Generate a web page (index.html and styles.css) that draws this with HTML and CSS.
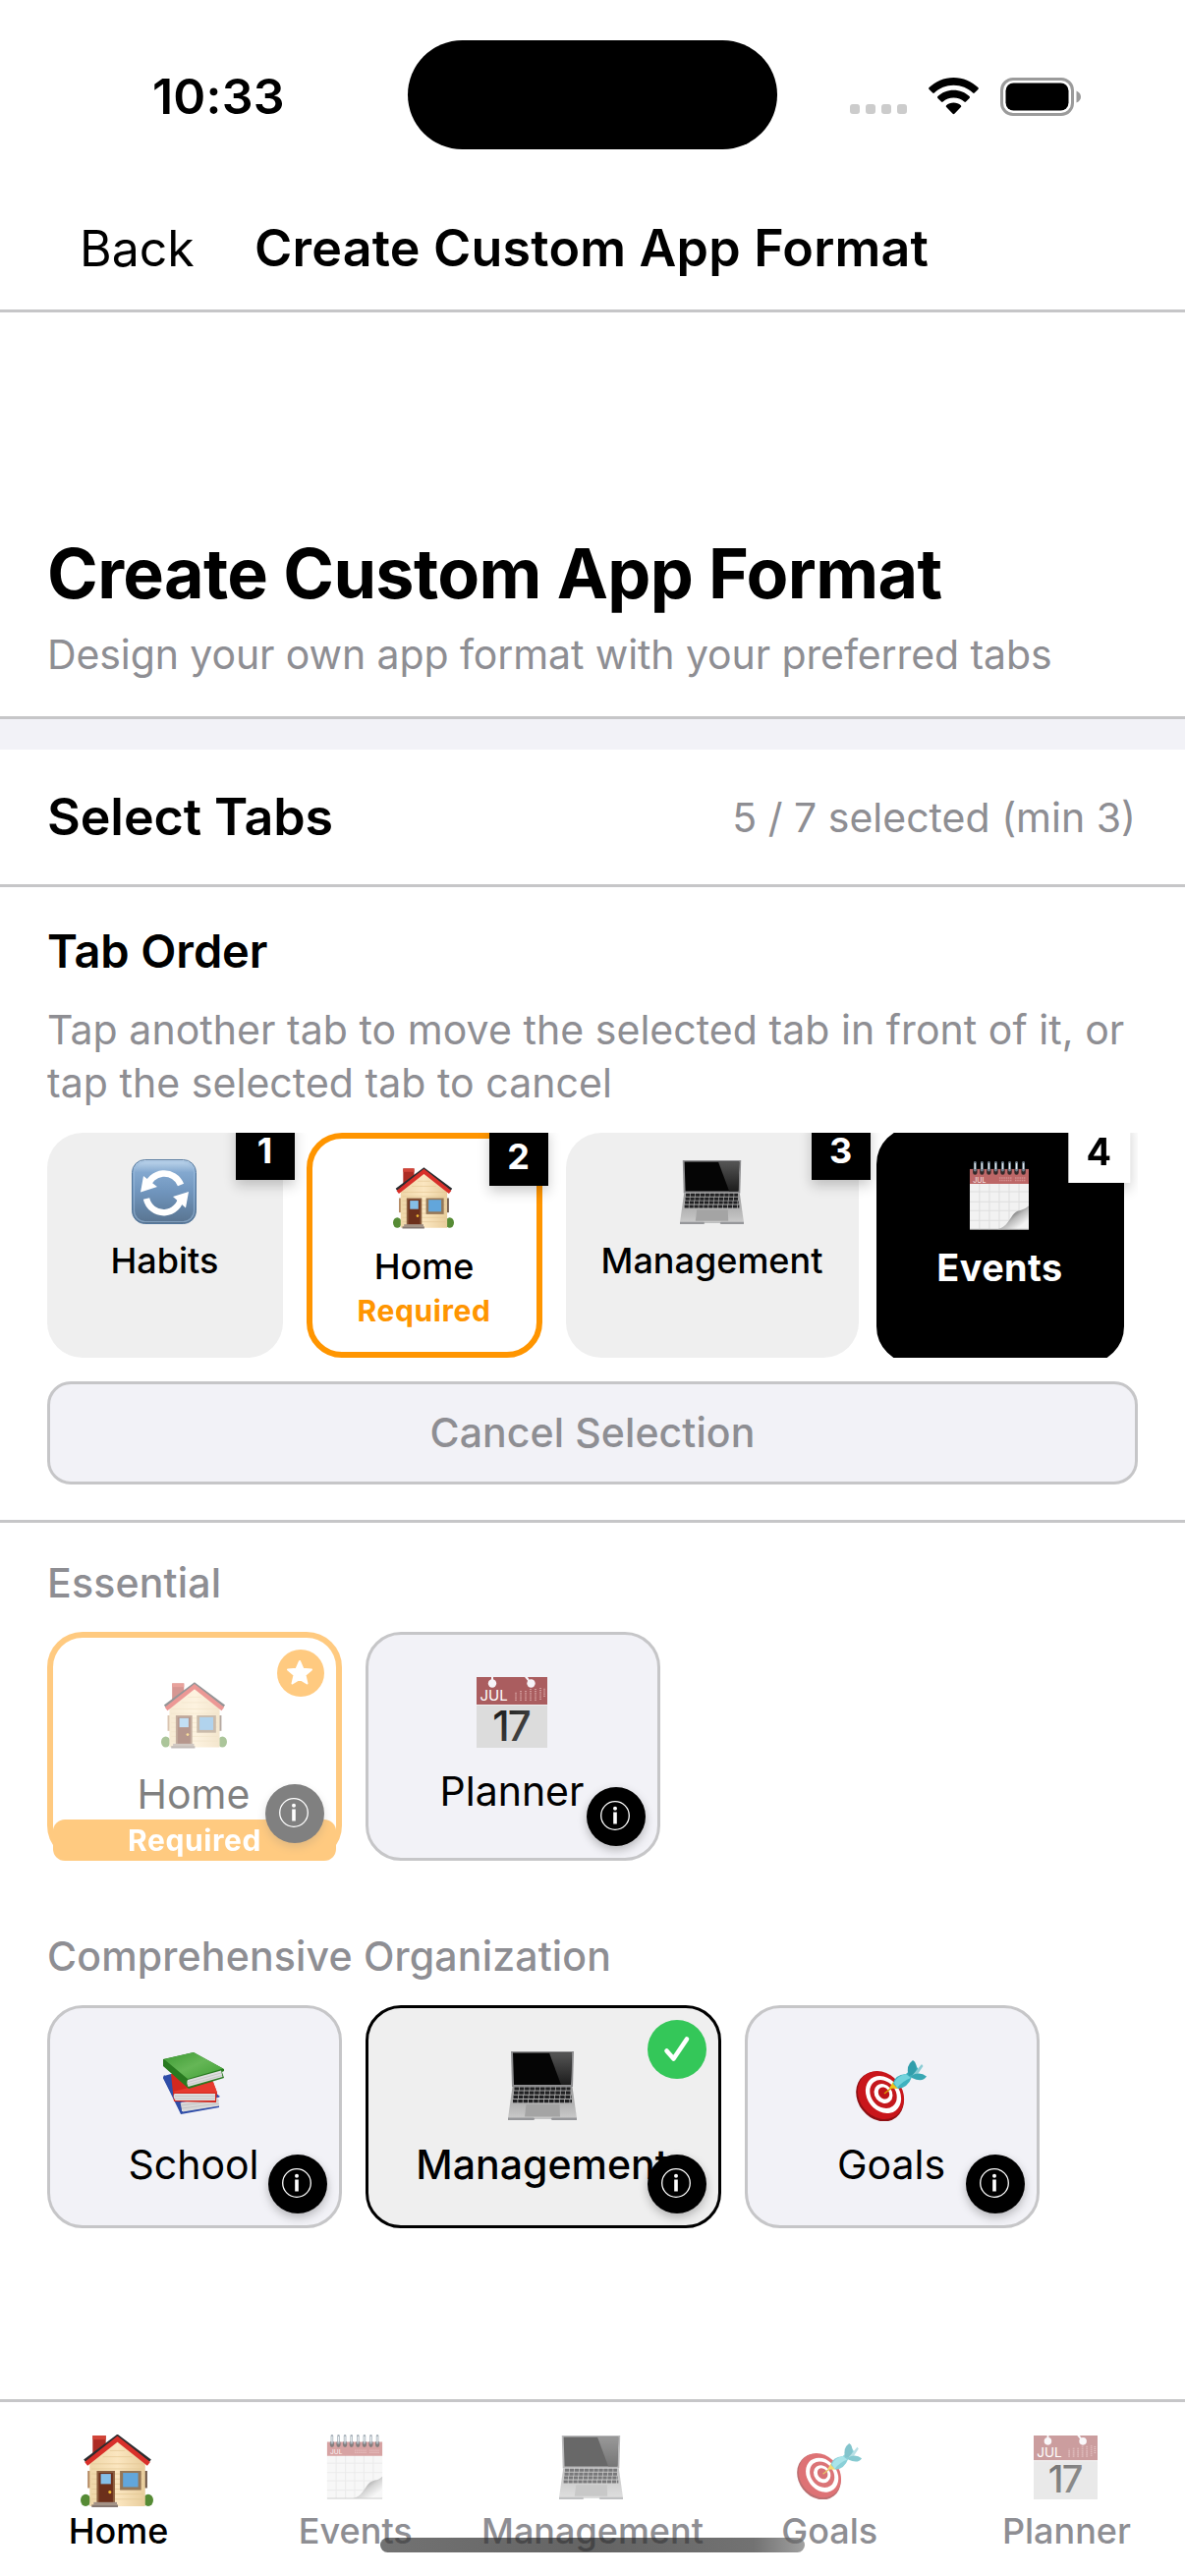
FILE: index.html
```html
<!DOCTYPE html>
<html lang="en">

<head>
  <meta charset="utf-8" />
  <title>Create Custom App Format</title>
  <link rel="stylesheet" href="styles.css">
</head>

<body>
  <!-- icons used by the tabs -->
  <svg class="icon_defs" width="0" height="0">
    <defs>
      <linearGradient id="blueBox" x1="0" y1="0" x2="0" y2="1">
        <stop offset="0" stop-color="#c3d9ee" /><stop offset="0.2" stop-color="#83a8cf" />
        <stop offset="0.5" stop-color="#7095bd" /><stop offset="1" stop-color="#58738f" />
      </linearGradient>
      <linearGradient id="wall" x1="0" y1="0" x2="1" y2="0">
        <stop offset="0" stop-color="#eed6a8" /><stop offset="0.5" stop-color="#fbe6c0" /><stop offset="1" stop-color="#e8cd9c" />
      </linearGradient>
      <linearGradient id="curl" x1="0" y1="0" x2="1" y2="1">
        <stop offset="0.3" stop-color="#555" /><stop offset="0.55" stop-color="#bbb" /><stop offset="0.8" stop-color="#f2f2f2" />
      </linearGradient>
      <linearGradient id="metal" x1="0" y1="0" x2="0" y2="1">
        <stop offset="0" stop-color="#999" /><stop offset="1" stop-color="#c9c9c9" />
      </linearGradient>
      <linearGradient id="green" x1="0" y1="0" x2="1" y2="1">
        <stop offset="0" stop-color="#3d9a33" /><stop offset="0.5" stop-color="#65b656" /><stop offset="1" stop-color="#3f9f34" />
      </linearGradient>
      <linearGradient id="glare" x1="0" y1="0" x2="0" y2="1">
        <stop offset="0" stop-color="#555" /><stop offset="1" stop-color="#1c1c1c" />
      </linearGradient>
      <linearGradient id="digits" x1="0" y1="0" x2="1" y2="1">
        <stop offset="0" stop-color="#111" /><stop offset="1" stop-color="#555" />
      </linearGradient>
    </defs>

    <symbol id="habits" viewBox="0 0 66 66">
      <rect x="0.5" y="0.5" width="65" height="65" rx="13" fill="url(#blueBox)" stroke="#54789d" />
      <rect x="2.5" y="2.5" width="61" height="61" rx="11" fill="none" stroke="#9dbddc" stroke-width="1.2" opacity="0.6" />
      <path d="M15.500 29A18 18 0 0 1 50 26M50.500 38A18 18 0 0 1 15 40" fill="none" stroke="#fff" stroke-width="6.500" />
      <path d="M12 17L9 33.500L26 28ZM58 33L42 38L55 49.500Z" fill="#fff" />
    </symbol>

    <symbol id="home" viewBox="0 0 72 72">
      <rect x="12" y="1" width="13" height="27" fill="#ad2c24" />
      <rect x="12" y="1" width="13" height="4" fill="#d14438" />
      <rect x="7" y="36" width="3" height="17" fill="#b48a63" /><rect x="63" y="36" width="3" height="17" fill="#6b5344" />
      <ellipse cx="5" cy="65" rx="5" ry="6" fill="#568b35" /><ellipse cx="67" cy="65" rx="5" ry="6" fill="#568b35" />
      <path d="M9 28L37 4L64 28V71H9Z" fill="url(#wall)" />
      <path d="M11 29H62M11 34H62M11 39H62M11 44H62M11 49H62M11 54H62M11 59H62M11 64H62M22 22H51M29 16H44" stroke="#e3c795" stroke-width="0.7" />
      <path d="M4 26L36.500 1.500L69 26" fill="none" stroke="#2b2b2e" stroke-width="3" />
      <path d="M5.500 29L36.500 4.500L67.500 29" fill="none" stroke="#d9302a" stroke-width="4.600" />
      <rect x="16" y="36" width="18" height="32" fill="#8a5d3e" /><rect x="18" y="38" width="14" height="29" fill="#6c2f1b" />
      <rect x="20" y="39" width="10" height="10" fill="#85bee8" /><circle cx="29" cy="57" r="1.5" fill="#f2bd35" />
      <rect x="39" y="36" width="21" height="19" fill="#957757" /><rect x="42" y="38" width="15" height="14" fill="#62a6db" />
      <rect x="13" y="67" width="23" height="2.500" fill="#a39287" /><rect x="11" y="69.500" width="26" height="2.500" fill="#857872" />
    </symbol>

    <symbol id="laptop" viewBox="0 0 70 70">
      <path d="M3 0H67L66 36H4Z" fill="#8d8d8f" />
      <path d="M5 1.500H65L64 34H6Z" fill="#050505" />
      <path d="M42 1.500H65L64 34H54Z" fill="url(#glare)" />
      <path d="M4.500 36H65.500L70 68H0Z" fill="url(#metal)" />
      <path d="M6.500 38H63.500M6 42.200H64M5.500 46.400H64.500M5 50.600H65" stroke="#202022" stroke-width="3.200" stroke-dasharray="4.500 0.800" />
      <path d="M18.500 54H52.500L53 66.500H17Z" fill="#a4a4a4" />
      <path d="M0 67.500H26L28 69H43L45 67.500H70V70H45L43 68.500H28L26 70H0Z" fill="#96979a" />
    </symbol>

    <symbol id="spiral" viewBox="0 0 60 70">
      <rect x="0" y="8" width="60" height="61" fill="#f2f2f2" />
      <path d="M10 22V69M20 22V69M30 22V69M40 22V69M50 22V69M0 31H60M0 41H60M0 50H60M0 60H60" stroke="#dedede" stroke-width="1" />
      <path d="M0 8H60V23H0Z" fill="#bd6767" />
      <path d="M30 17H43M30 19.500H43M46 17H57M46 19.500H57" stroke="#d38e8e" stroke-width="1.300" stroke-dasharray="1.500 0.700" />
      <path d="M60 45C54 51 50 48 45 53C41 57 38 67 28 69H60Z" fill="url(#curl)" />
      <path d="M0 69H60" stroke="#aaa" />
      <path d="M5.500 9V11.500M12.500 9V11.500M19.500 9V11.500M26.500 9V11.500M33.500 9V11.500M40.500 9V11.500M47.500 9V11.500M54.500 9V11.500" stroke="#33292a" stroke-width="4.400" stroke-linecap="round" />
      <path d="M5.500 1.500V9M12.500 1.500V9M19.500 1.500V9M26.500 1.500V9M33.500 1.500V9M40.500 1.500V9M47.500 1.500V9M54.500 1.500V9" stroke="#71818f" stroke-width="2.800" stroke-linecap="round" />
      <path d="M5.500 2V8M12.500 2V8M19.500 2V8M26.500 2V8M33.500 2V8M40.500 2V8M47.500 2V8M54.500 2V8" stroke="#dfe7ec" stroke-width="1.200" />
    </symbol>

    <symbol id="planner" viewBox="0 0 72 72">
      <rect width="72" height="72" fill="#dcdcdc" />
      <rect width="72" height="28" fill="#aa5d5f" />
      <circle cx="16" cy="6.500" r="4.200" fill="#f7f4f8" /><circle cx="55.500" cy="6.500" r="4.200" fill="#f7f4f8" />
      <path d="M15 0H17V5H15ZM49 0H52L55 5H53Z" fill="#f7f4f8" />
      <path d="M40 24V15M45 24V14M50 24V13M55 24V12M60 24V12M65 23V11M69 20V11" stroke="#d09999" stroke-width="2" stroke-dasharray="1.200 1" />
      <path d="M0 28.500H72" stroke="#eee" />
    </symbol>

    <symbol id="school" viewBox="0 0 62 64">
      <path d="M0 26L1 23L18 40L19 62Z" fill="#2d499d" />
      <path d="M0 26L18 63L57 56V54L19 60L16 50L56 46L58 45L52 40L20 45L8 22L1 24Z" fill="#2f4da8" />
      <path d="M12 30L57 45L18 51Z" fill="#3f5fc4" />
      <path d="M17.500 51.500L56 47L57 54.500L20 60.500Z" fill="#d9d9d9" />
      <path d="M18 54L57 49M19 57L57 52" stroke="#bcbcbc" stroke-width="0.700" />
      <path d="M8 22L11 50L54 51V49L55 41L50 28L30 20Z" fill="#d3281f" />
      <path d="M10 40L51 30L55 41H12Z" fill="#e63a2f" />
      <path d="M11.500 42H53V49H12.500Q9.500 45 11.500 42Z" fill="#dedede" />
      <path d="M12 44.500H53M12 47H53" stroke="#bdbdbd" stroke-width="0.700" />
      <path d="M0 7L31 0L62 17V19L60 20L62 26L26 37L0 14Z" fill="#287a20" />
      <path d="M1 7L31 0L61 16.500L25 27Z" fill="url(#green)" />
      <path d="M25 28L59 18.500L60.500 25L25.500 35Q23.500 31 25 28Z" fill="#dedede" />
      <path d="M25 30.500L59 21M25 33L60 23.500" stroke="#bdbdbd" stroke-width="0.700" />
    </symbol>

    <symbol id="goals" viewBox="0 0 72 62">
      <ellipse cx="24.500" cy="37" rx="22.500" ry="27" transform="rotate(-38 24.500 37)" fill="#8e1014" />
      <ellipse cx="25.500" cy="35.500" rx="22" ry="26" transform="rotate(-38 25.500 35.500)" fill="#c9161b" />
      <ellipse cx="28" cy="35" rx="16.500" ry="20.500" transform="rotate(-38 28 35)" fill="#fff" />
      <ellipse cx="28" cy="34.500" rx="12.500" ry="15.500" transform="rotate(-38 28 34.500)" fill="#c4181d" />
      <ellipse cx="28" cy="34" rx="8.800" ry="10.500" transform="rotate(-38 28 34)" fill="#fff" />
      <ellipse cx="28.500" cy="33.500" rx="5.200" ry="6.500" transform="rotate(-38 28.500 33.500)" fill="#bd1318" />
      <path d="M29 34L39 26" stroke="#d8a200" stroke-width="1.500" />
      <path d="M34 28.500L38 22L43 29Z" fill="#efc318" />
      <path d="M38 24Q39 15 51 14L61 5L64 10L57 17Q53 28 43 29Z" fill="#3fb2bf" />
      <path d="M39 23Q42 16 51 14L56 18Q48 21 42 28Z" fill="#72d3dc" />
      <path d="M54 16Q50 6 58 0Q63 2 61 14Z" fill="#319eab" />
      <path d="M57 16L67 4L68.500 6L61 17Z" fill="#8bcdd5" />
      <path d="M56 16Q65 11 72 16.500Q68 23 57 18Z" fill="#38a7b3" />
    </symbol>

    <symbol id="info" viewBox="0 0 30 30">
      <circle cx="15" cy="15" r="14.300" fill="none" stroke="#fff" stroke-width="1.300" />
      <circle cx="15" cy="7.800" r="2" fill="#fff" />
      <rect x="13.200" y="11.500" width="3.600" height="12" fill="#fff" />
    </symbol>
  </svg>

  <div class="page">
    <div class="status_bar">
      <span class="status_time">10:33</span>
      <div class="island"></div>
      <div class="status_icons">
        <div class="signal"><i></i><i></i><i></i><i></i></div>
        <svg class="wifi" viewBox="0 0 51 38">
          <path d="M25.500 0C35.300 0 44 3.900 50.400 10.100Q51.300 11 50.400 11.900L46.800 15.500Q46 16.300 45.100 15.500C40 10.700 33.100 7.800 25.500 7.800S11 10.700 5.900 15.500Q5 16.300 4.200 15.500L0.600 11.900Q-0.300 11 0.600 10.100C7 3.900 15.700 0 25.500 0Z" />
          <path d="M25.500 12.800C31.800 12.800 37.400 15.200 41.600 19.100Q42.500 20 41.600 20.900L38 24.500Q37.200 25.300 36.300 24.500C33.500 22 29.700 20.500 25.500 20.500S17.500 22 14.700 24.500Q13.800 25.300 13 24.500L9.400 20.900Q8.500 20 9.400 19.100C13.600 15.200 19.200 12.800 25.500 12.800Z" />
          <path d="M25.500 25.600C28.300 25.600 30.900 26.600 32.900 28.200Q33.800 29.100 32.900 30L26.400 36.700Q25.500 37.600 24.600 36.700L18.100 30Q17.200 29.100 18.100 28.200C20.100 26.600 22.700 25.600 25.500 25.600Z" />
        </svg>
        <svg class="battery" viewBox="0 0 82 39">
          <rect x="1.500" y="1.500" width="72" height="36" rx="11.500" fill="none" stroke="#9b9b9b" stroke-width="3" />
          <rect x="5.500" y="5.500" width="64" height="28" rx="8" />
          <path d="M77.500 13.500Q82 15.500 82 19.500T77.500 25.500Z" fill="#9b9b9b" />
        </svg>
      </div>
    </div>

    <div class="nav_bar">
      <span class="nav_back">Back</span>
      <span class="nav_title">Create Custom App Format</span>
    </div>

    <div class="hero">
      <h1 class="hero_title">Create Custom App Format</h1>
      <p class="hero_text">Design your own app format with your preferred tabs</p>
    </div>

    <div class="select_row">
      <h2 class="select_title">Select Tabs</h2>
      <span class="select_count">5 / 7 selected (min 3)</span>
    </div>

    <!-- Tab order -->
    <div class="order">
      <h3 class="order_title">Tab Order</h3>
      <p class="order_text">Tap another tab to move the selected tab in front of it, or<br>tap the selected tab to cancel</p>
      <div class="order_strip">
        <div class="order_card">
          <div class="order_icon"><svg width="66" height="66"><use href="#habits" /></svg></div>
          <span class="order_name">Habits</span>
          <span class="order_number">1</span>
        </div>
        <div class="order_card order_required">
          <div class="order_icon"><svg width="62" height="63"><use href="#home" /></svg></div>
          <span class="order_name">Home</span>
          <span class="order_tag">Required</span>
          <span class="order_number">2</span>
        </div>
        <div class="order_card order_wide">
          <div class="order_icon"><svg width="65" height="65"><use href="#laptop" /></svg></div>
          <span class="order_name">Management</span>
          <span class="order_number">3</span>
        </div>
        <div class="order_card order_active">
          <div class="order_icon">
            <svg width="58" height="67" viewBox="0 0 60 70"><use href="#spiral" /><text class="spiral_month" x="3.500" y="21.500">JUL</text></svg>
          </div>
          <span class="order_name">Events</span>
          <span class="order_number">4</span>
        </div>
      </div>
      <div class="cancel">Cancel Selection</div>
    </div>

    <!-- Essential -->
    <div class="group">
      <h3 class="group_title">Essential</h3>
      <div class="group_cards group_tall">
        <div class="card card_required">
          <div class="card_icon"><svg width="67" height="68"><use href="#home" /></svg></div>
          <span class="card_name">Home</span>
          <div class="star">
            <svg width="28" height="27" viewBox="0 0 28 27"><path d="M14 2L17.400 9.700L26 10.500L19.500 16L21.500 24.500L14 20L6.500 24.500L8.500 16L2 10.500L10.600 9.700Z" fill="#fff" stroke="#fff" stroke-width="2" stroke-linejoin="round" /></svg>
          </div>
          <div class="required_bar">Required</div>
          <div class="info"><svg width="30" height="30"><use href="#info" /></svg></div>
        </div>
        <div class="card">
          <div class="card_icon">
            <svg width="72" height="72" viewBox="0 0 72 72"><use href="#planner" /><text class="planner_month" x="3.500" y="24">JUL</text><text class="planner_day" x="35" y="64.500" fill="url(#digits)">17</text></svg>
          </div>
          <span class="card_name">Planner</span>
          <div class="info"><svg width="30" height="30"><use href="#info" /></svg></div>
        </div>
      </div>
    </div>

    <!-- Comprehensive Organization -->
    <div class="group">
      <h3 class="group_title">Comprehensive Organization</h3>
      <div class="group_cards">
        <div class="card">
          <div class="card_icon card_icon_books"><svg width="62" height="64"><use href="#school" /></svg></div>
          <span class="card_name">School</span>
          <div class="info"><svg width="30" height="30"><use href="#info" /></svg></div>
        </div>
        <div class="card card_selected">
          <div class="card_icon"><svg width="70" height="70"><use href="#laptop" /></svg></div>
          <span class="card_name">Management</span>
          <div class="check">
            <svg width="28" height="28" viewBox="0 0 28 28"><path d="M3.500 15.500L10.500 23.500L24 3.500" fill="none" stroke="#fff" stroke-width="4.600" stroke-linecap="round" stroke-linejoin="round" /></svg>
          </div>
          <div class="info"><svg width="30" height="30"><use href="#info" /></svg></div>
        </div>
        <div class="card">
          <div class="card_icon card_icon_goals"><svg width="72" height="62"><use href="#goals" /></svg></div>
          <span class="card_name">Goals</span>
          <div class="info"><svg width="30" height="30"><use href="#info" /></svg></div>
        </div>
      </div>
    </div>

    <div class="tab_bar">
      <div class="tab tab_current">
        <div class="tab_icon"><svg width="74" height="74"><use href="#home" /></svg></div>
        <span>Home</span>
      </div>
      <div class="tab">
        <div class="tab_icon">
          <svg width="58" height="66" viewBox="0 0 60 70"><use href="#spiral" /><text class="spiral_month" x="3.500" y="21.500">JUL</text></svg>
        </div>
        <span>Events</span>
      </div>
      <div class="tab">
        <div class="tab_icon"><svg width="65" height="65"><use href="#laptop" /></svg></div>
        <span>Management</span>
      </div>
      <div class="tab">
        <div class="tab_icon tab_icon_goals"><svg width="66" height="57"><use href="#goals" /></svg></div>
        <span>Goals</span>
      </div>
      <div class="tab">
        <div class="tab_icon">
          <svg width="65" height="65" viewBox="0 0 72 72"><use href="#planner" /><text class="planner_month" x="3.500" y="24">JUL</text><text class="planner_day" x="35" y="64.500" fill="url(#digits)">17</text></svg>
        </div>
        <span>Planner</span>
      </div>
      <div class="home_indicator"></div>
    </div>
  </div>
</body>

</html>
```
FILE: styles.css
```css
* {
  box-sizing: border-box;
}

body {
  margin: 0;
  font-family: Inter, "Liberation Sans", sans-serif;
  background-color: #ffffff;
  color: #000000;
}

h1,
h2,
h3,
p {
  margin: 0;
}

svg {
  display: block;
}

.icon_defs {
  position: absolute;
}

.page {
  position: relative;
  display: flex;
  flex-direction: column;
  width: 1206px;
  height: 2622px;
  overflow: hidden;
}

/* status bar */
.status_bar {
  position: relative;
  display: flex;
  justify-content: space-between;
  align-items: center;
  height: 196px;
  padding: 0 106px 0 155px;
}

.status_time {
  font-size: 50px;
  font-weight: 600;
  letter-spacing: 0.2px;
}

.island {
  position: absolute;
  left: 415px;
  top: 41px;
  width: 376px;
  height: 111px;
  border-radius: 56px;
  background-color: #000000;
}

.status_icons {
  display: flex;
  align-items: center;
}

.signal {
  display: flex;
  gap: 6px;
  margin-right: 22px;
  padding-top: 26px;
}

.signal i {
  width: 10px;
  height: 10px;
  border-radius: 3px;
  background-color: #cccccc;
}

.wifi {
  width: 51px;
  height: 38px;
  margin-right: 22px;
}

.battery {
  width: 82px;
  height: 39px;
}

/* navigation */
.nav_bar {
  display: flex;
  height: 122px;
  padding: 27px 81px 0;
  border-bottom: 3px solid #c6c6c8;
  line-height: 60px;
  font-size: 50px;
}

.nav_back {
  width: 178px;
}

.nav_title {
  font-size: 52px;
  font-weight: 600;
  letter-spacing: 0.2px;
  white-space: nowrap;
}

.hero {
  padding: 224px 48px 36px;
  border-bottom: 3px solid #c6c6c8;
}

.hero_title {
  font-size: 70px;
  line-height: 84px;
  font-weight: 700;
  letter-spacing: -0.65px;
  white-space: nowrap;
}

.hero_text {
  margin-top: 13px;
  font-size: 41px;
  line-height: 54px;
  letter-spacing: -0.1px;
  color: #8e8e93;
}

.select_row {
  display: flex;
  justify-content: space-between;
  align-items: center;
  height: 171px;
  padding: 0 50px 0 48px;
  border-top: 31px solid #f2f2f7;
  border-bottom: 3px solid #c6c6c8;
}

.select_title {
  font-size: 52px;
  font-weight: 600;
  letter-spacing: -0.1px;
}

.select_count {
  font-size: 41px;
  color: #8e8e93;
}

/* tab order */
.order {
  padding: 36px 48px 36px;
  border-bottom: 3px solid #c6c6c8;
}

.order_title {
  font-size: 47px;
  line-height: 58px;
  font-weight: 600;
  letter-spacing: -0.1px;
}

.order_text {
  margin-top: 24px;
  font-size: 41px;
  line-height: 54px;
  letter-spacing: 0.05px;
  color: #8e8e93;
  white-space: nowrap;
}

.order_strip {
  display: flex;
  gap: 24px;
  height: 229px;
  margin-top: 24px;
  overflow: hidden;
}

.order_card {
  position: relative;
  display: flex;
  flex-direction: column;
  align-items: center;
  flex: none;
  width: 240px;
  padding-top: 21px;
  border-radius: 36px;
  background-color: #efefef;
}

.order_wide {
  width: 298px;
}

.order_icon {
  display: flex;
  align-items: center;
  height: 78px;
  padding-right: 2px;
}

.order_name {
  margin-top: 9px;
  padding-right: 1px;
  font-size: 36px;
  line-height: 44px;
  font-weight: 500;
}

.order_number {
  position: absolute;
  top: -12px;
  right: -12px;
  width: 60px;
  height: 60px;
  padding-right: 1px;
  background-color: #000000;
  color: #ffffff;
  font-size: 36px;
  line-height: 60px;
  font-weight: 700;
  text-align: center;
  box-shadow: 0 6px 12px rgba(0, 0, 0, 0.2);
}

.order_required {
  border: 6px solid #ff9500;
  background-color: #ffffff;
}

.order_tag {
  margin-top: 5px;
  padding-right: 1px;
  font-size: 30px;
  line-height: 36px;
  font-weight: 700;
  letter-spacing: 0.6px;
  color: #ff9500;
}

.order_active {
  border: 6px solid #000000;
  background-color: #000000;
  color: #ffffff;
  transform: scale(1.05);
}

.order_active .order_name {
  font-weight: 700;
  letter-spacing: 0.4px;
}

.order_active .order_number {
  background-color: #ffffff;
  color: #000000;
}

.cancel {
  height: 105px;
  margin-top: 24px;
  border: 3px solid #c6c6c8;
  border-radius: 24px;
  background-color: #f2f2f7;
  font-size: 41px;
  line-height: 99px;
  font-weight: 500;
  letter-spacing: 0.1px;
  text-align: center;
  color: #8e8e93;
}

/* tab groups */
.group {
  padding: 36px 48px;
}

.group_title {
  font-size: 41px;
  line-height: 50px;
  font-weight: 500;
  letter-spacing: 0.18px;
  color: #8e8e93;
}

.group_cards {
  display: flex;
  gap: 24px;
  height: 227px;
  margin-top: 25px;
}

.group_tall {
  height: 233px;
}

.card {
  position: relative;
  display: flex;
  flex-direction: column;
  align-items: center;
  width: 300px;
  padding-top: 34px;
  border: 3px solid #c6c6c8;
  border-radius: 36px;
  background-color: #f2f2f7;
}

.card_icon {
  display: flex;
  align-items: center;
  height: 90px;
  padding-right: 2px;
}

.card_icon_books {
  padding-bottom: 4px;
}

.card_icon_goals {
  padding-top: 10px;
}

.card_name {
  margin-top: 10px;
  padding-right: 2px;
  font-size: 41px;
  line-height: 50px;
}

.card_required {
  border: 6px solid #ff9500;
  background-color: #ffffff;
  opacity: 0.5;
}

.card_selected {
  width: 362px;
  border-color: #000000;
  background-color: #efefef;
}

.card_selected .card_name {
  font-weight: 500;
}

.required_bar {
  position: absolute;
  left: 0;
  right: 0;
  bottom: -6px;
  height: 42px;
  border-radius: 12px;
  background-color: #ff9500;
  color: #ffffff;
  font-size: 30px;
  line-height: 43px;
  font-weight: 700;
  letter-spacing: 0.6px;
  text-align: center;
}

.info,
.star,
.check {
  position: absolute;
  display: flex;
  align-items: center;
  justify-content: center;
  border-radius: 50%;
}

.info {
  right: 12px;
  bottom: 12px;
  width: 60px;
  height: 60px;
  padding: 0 2px 2px 0;
  background-color: #000000;
  box-shadow: 0 4px 10px rgba(0, 0, 0, 0.25);
}

.star {
  top: 12px;
  right: 12px;
  width: 48px;
  height: 48px;
  padding: 0 2px 2px 0;
  background-color: #ff9500;
}

.check {
  top: 12px;
  right: 12px;
  width: 60px;
  height: 60px;
  background-color: #34c759;
}

/* bottom tab bar */
.tab_bar {
  position: relative;
  display: grid;
  grid-template-columns: repeat(5, 1fr);
  height: 180px;
  margin-top: auto;
  border-top: 3px solid #c6c6c8;
  background-color: #ffffff;
}

.tab {
  display: flex;
  flex-direction: column;
  align-items: center;
  padding-top: 27px;
  font-size: 36px;
  line-height: 44px;
  font-weight: 500;
  color: #8e8e93;
}

.tab_icon {
  display: flex;
  align-items: center;
  height: 78px;
  margin-bottom: 4px;
  padding-right: 2px;
  opacity: 0.6;
}

.tab_icon_goals {
  padding: 8px 0 0;
}

.tab_current {
  color: #000000;
}

.tab_current .tab_icon {
  padding: 8px 4px 0 0;
  opacity: 1;
}

.home_indicator {
  position: absolute;
  left: 387px;
  bottom: 24px;
  width: 432px;
  height: 15px;
  border-radius: 8px;
  background: linear-gradient(to right, rgba(60, 60, 60, 0.72), rgba(40, 40, 40, 0.72) 50%, rgba(60, 60, 60, 0.72) 88%, rgba(110, 110, 110, 0.65));
}

.spiral_month {
  font: 500 7px Inter, sans-serif;
  fill: #f3dede;
}

.planner_month {
  font: 400 15px Inter, sans-serif;
  fill: #ffffff;
}

.planner_day {
  font: 500 42px Inter, sans-serif;
  letter-spacing: -2px;
  text-anchor: middle;
}
```
